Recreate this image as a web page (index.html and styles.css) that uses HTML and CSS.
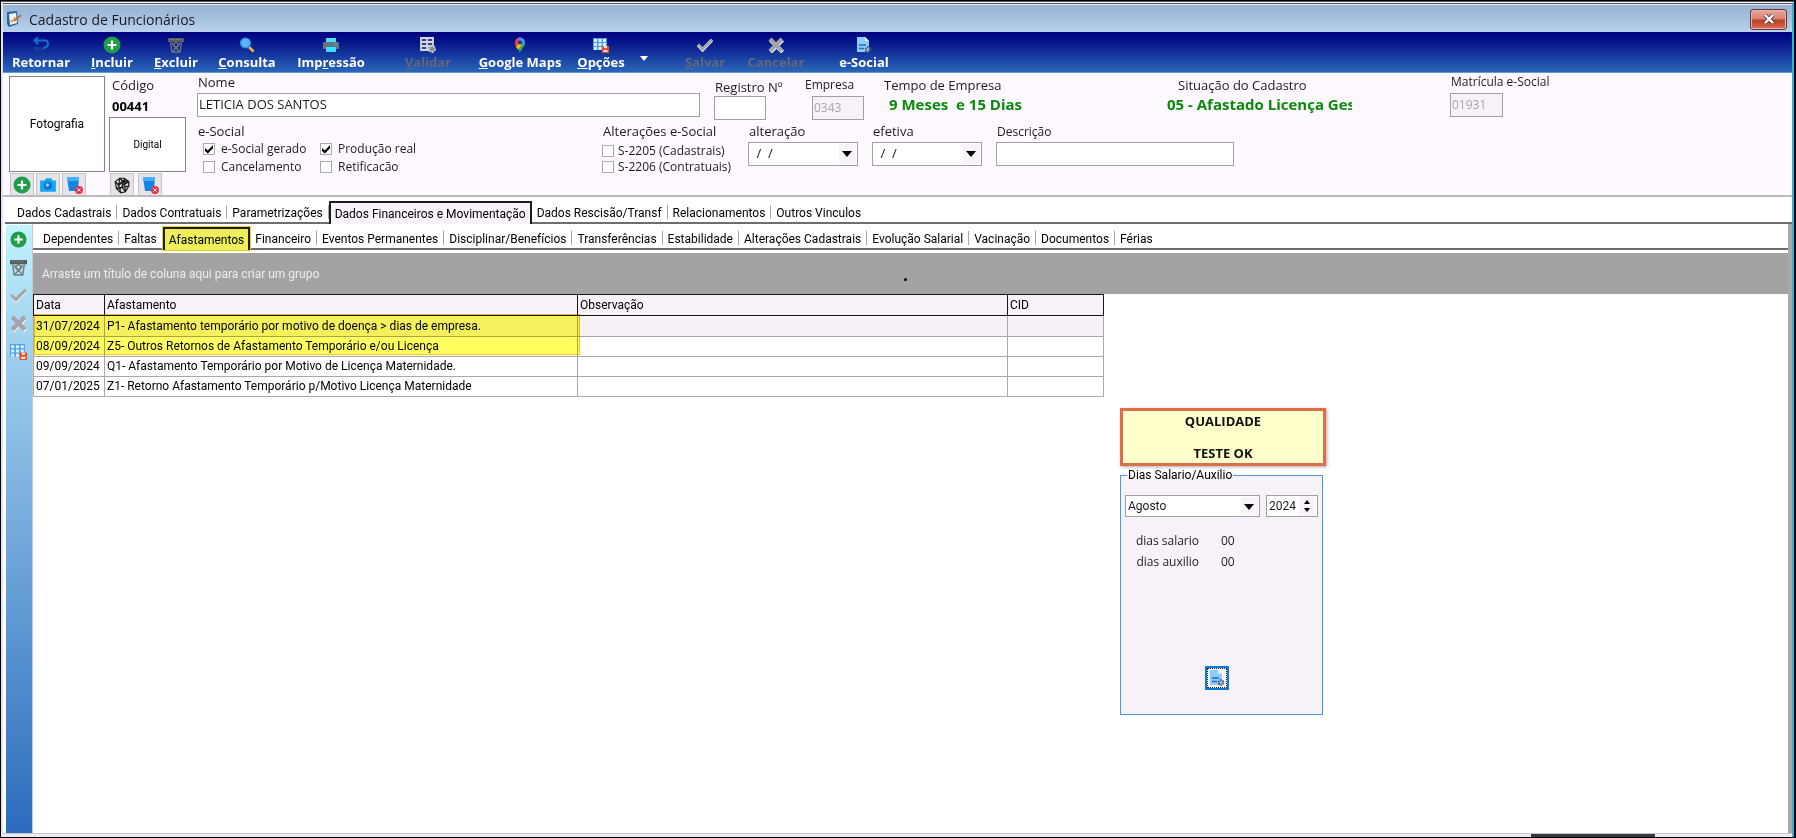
FILE: index.html
```
<!DOCTYPE html>
<html lang="pt-BR">
<head>
  <meta charset="UTF-8">
  <meta name="viewport" content="width=device-width, initial-scale=1.0">
  <title>Cadastro de Funcionários</title>
  <link rel="stylesheet" href="styles.css">
</head>
<body>
  <svg class="defs" aria-hidden="true">
    <symbol id="i-mais" viewBox="0 0 18 18">
      <circle cx="9" cy="9" r="8.500" fill="#1f9d49"/>
      <path d="M9 4.500v9M4.500 9h9" stroke="#fff" stroke-width="2.200"/>
    </symbol>
    <symbol id="i-voltar" viewBox="0 0 16 16">
      <path d="M5 0L1.500 3.500 5 7M2 3.500h10a3 3 0 0 1 3 3q0 4-5 4.500" fill="none" stroke="#1670c8" stroke-width="2"/>
      <path d="M2 10v4M4.500 10v4M7 10v4M9.500 11v3" stroke="#1457ae"/>
    </symbol>
    <symbol id="i-lixo" viewBox="0 0 16 16">
      <path d="M0 1h16v4H0z" fill="#555b60"/>
      <path d="M2 2.500h12" stroke="#8b9094" stroke-dasharray="1 1"/>
      <path d="M2.500 5l1.500 10h8l1.500-10M4 6l7 8M12 6l-7 8M8 5l3 3-3 3-3-3z" fill="none" stroke="#70777b" stroke-width="1.300"/>
    </symbol>
    <symbol id="i-lupa" viewBox="0 0 16 16">
      <path d="M10 10l4.500 4.500" stroke="#f2bd43" stroke-width="2.500"/>
      <circle cx="6.500" cy="6" r="5" fill="#59b5fb" stroke="#2d86dc" stroke-width="1.200"/>
    </symbol>
    <symbol id="i-impressora" viewBox="0 0 16 16">
      <path d="M3 1h10v4H3z" fill="#4fdff5"/>
      <path d="M1 5h14q1 0 1 1v6H0V6q0-1 1-1z" fill="#66747e"/>
      <path d="M3 10h10v5H3z" fill="#3ddcf6"/>
      <path d="M12 7h2" stroke="#3ddcf6"/>
    </symbol>
    <symbol id="i-validar" viewBox="0 0 16 16">
      <path d="M1 1h12v12H1zM1 5h12M1 9h12M7 1v12" fill="#33418f" stroke="#d8d8de" stroke-width="1.800"/>
      <circle cx="12" cy="12" r="3" fill="#8c8c94" stroke="#c8c8ce" stroke-width="2" stroke-dasharray="2 1"/>
    </symbol>
    <symbol id="i-mapa" viewBox="0 0 16 16">
      <path d="M8 16C7 12 3 10 3 5.500L8 6l5 0c0 4-4 6-5 10z" fill="#34a853"/>
      <path d="M3 5.500C3 3 4.500 1.500 6 1l3 4-4.500 5.500C3.500 9 3 7.500 3 5.500z" fill="#ea4335"/>
      <path d="M8 5l-4 5 2 2.500 6-7z" fill="#fbbc04"/>
      <path d="M5.500 1C9-.500 13 1.500 13 5.500L10 9 7 4z" fill="#4a90f0"/>
      <circle cx="8" cy="5.500" r="2" fill="#123b8c"/>
    </symbol>
    <symbol id="i-grade" viewBox="0 0 16 16">
      <path d="M0 1h14v12H0z" fill="#4b9fe0"/>
      <path d="M1 2h3v3H1zM5.500 2h3v3h-3zM10 2h3v3h-3zM1 6h3v3H1zM5.500 6h3v3h-3zM10 6h3v3h-3zM1 10h3v3H1zM5.500 10h3v3h-3z" fill="#d9f1ff"/>
      <path d="M9 9h7v7H9z" fill="#f04d23"/>
      <path d="M11 9h3v2h-3zM10.500 13h4v2h-4z" fill="#ffe5db"/>
    </symbol>
    <symbol id="i-check" viewBox="0 0 16 16">
      <path d="M1 8l4.500 5L15 3" fill="none" stroke="#fff" stroke-width="3"/>
      <path d="M1 7.500L5.500 12 15 2.500" fill="none" stroke="#a6a6ac" stroke-width="3"/>
    </symbol>
    <symbol id="i-x" viewBox="0 0 16 16">
      <path d="M2.500 3l12 12M14.500 3l-12 12" stroke="#fff" stroke-width="4"/>
      <path d="M2 2l12 12M14 2L2 14" stroke="#a3a3a9" stroke-width="4"/>
    </symbol>
    <symbol id="i-doc" viewBox="0 0 16 16">
      <path d="M1 0h8l4 4v11H1z" fill="#8fcbfb"/>
      <path d="M9 0l4 4H9z" fill="#dcefff"/>
      <path d="M3 8h7M3 11.500h5" stroke="#1c6fd0" stroke-width="1.500"/>
      <circle cx="12" cy="12.500" r="2.300" fill="none" stroke="#4d5f70" stroke-width="2.200" stroke-dasharray="1.500 .7"/>
    </symbol>
    <symbol id="i-camera" viewBox="0 0 16 16">
      <path d="M1 4h4l1-2h5l1 2h3v10H1z" fill="#18a4f4"/>
      <circle cx="8" cy="8.500" r="3.500" fill="#0870c5"/>
      <circle cx="7.500" cy="8" r="1.500" fill="#8ed5fb"/>
    </symbol>
    <symbol id="i-apagar" viewBox="0 0 18 18">
      <path d="M2 1h12l-1 14H4z" fill="#1286e2"/>
      <path d="M2 1h12v4H2z" fill="#42b1fa"/>
      <circle cx="14" cy="14" r="4" fill="#ed334c"/>
      <path d="M12.500 12.500l3 3M15.500 12.500l-3 3" stroke="#fff"/>
    </symbol>
    <symbol id="i-digital" viewBox="0 0 16 16">
      <g fill="none" stroke="#181818" stroke-width="1.100">
        <path d="M2 5l4-3 4 0 4 3 0 4-3 5-4 1-4-4z"/>
        <path d="M2 5l3 3 1-6M5 8l4-4 5 1M5 8l2 7M9 4l-1 6 6-1M8 10l3 4M3 11l5-1M6 2l5 5M11 7l3-2M10 2l1 12M4 9l4-3M12 4l-6 8"/>
      </g>
    </symbol>
    <symbol id="i-app" viewBox="0 0 18 18">
      <path d="M2 2l10-1 1 13-9 3-2-3z" fill="#2464a8"/>
      <path d="M4 4l7-1 1 10-7 2z" fill="#f3f8fe"/>
      <path d="M5 10l2 2 3-5" fill="none" stroke="#e4a93a" stroke-width="1.500"/>
      <path d="M9 11l7-6" stroke="#b96c3c" stroke-width="2"/>
    </symbol>
  </svg>

  <div class="janela">
    <header class="titulo">
      <svg class="icone-app"><use href="#i-app"/></svg>
      <h1>Cadastro de Funcionários</h1>
      <button class="fechar" aria-label="Fechar">
        <svg viewBox="0 0 12 10"><path d="M2 1l8 8M10 1L2 9" stroke="#55454b" stroke-width="4"/><path d="M2 1l8 8M10 1L2 9" stroke="#fff" stroke-width="2.400"/></svg>
      </button>
    </header>

    <nav class="barra">
      <div class="grupo">
        <button class="w-76"><svg><use href="#i-voltar"/></svg>Retornar</button>
        <button class="w-66"><svg class="maior"><use href="#i-mais"/></svg><span><u>I</u>ncluir</span></button>
        <button class="w-62"><svg><use href="#i-lixo"/></svg><span><u>E</u>xcluir</span></button>
        <button class="w-80"><svg><use href="#i-lupa"/></svg><span><u>C</u>onsulta</span></button>
        <button class="w-88"><svg><use href="#i-impressora"/></svg><span>Imp<u>r</u>essão</span></button>
      </div>
      <div class="grupo">
        <button class="w-88" disabled><svg><use href="#i-validar"/></svg><span><u>V</u>alidar</span></button>
        <button class="w-96"><svg><use href="#i-mapa"/></svg><span><u>G</u>oogle Maps</span></button>
        <button class="w-66"><svg><use href="#i-grade"/></svg><span><u>O</u>pções</span></button>
        <button class="mais-opcoes" aria-label="Mais opções"></button>
      </div>
      <div class="grupo">
        <button class="w-62" disabled><svg><use href="#i-check"/></svg><span><u>S</u>alvar</span></button>
        <button class="w-80" disabled><svg><use href="#i-x"/></svg>Cancelar</button>
        <button class="w-96"><svg><use href="#i-doc"/></svg>e-Social</button>
      </div>
    </nav>

    <section class="cabecalho">
      <div class="foto">
        <div class="quadro quadro-foto">Fotografia</div>
        <div class="mini">
          <button aria-label="Adicionar foto"><svg><use href="#i-mais"/></svg></button>
          <button aria-label="Câmera"><svg><use href="#i-camera"/></svg></button>
          <button aria-label="Apagar foto"><svg><use href="#i-apagar"/></svg></button>
        </div>
      </div>
      <div class="codigo">
        <span class="rotulo">Código</span>
        <strong>00441</strong>
        <div class="quadro quadro-digital">Digital</div>
        <div class="mini">
          <button aria-label="Ler digital"><svg><use href="#i-digital"/></svg></button>
          <button aria-label="Apagar digital"><svg><use href="#i-apagar"/></svg></button>
        </div>
      </div>

      <div class="dados">
        <div class="linha">
          <div class="campo nome">
            <label for="nome">Nome</label>
            <input type="text" id="nome" value="LETICIA DOS SANTOS">
          </div>
          <div class="campo registro">
            <label for="registro">Registro Nº</label>
            <input type="text" id="registro">
          </div>
          <div class="campo empresa">
            <label for="empresa">Empresa</label>
            <input type="text" id="empresa" value="0343" disabled>
          </div>
          <div class="campo tempo">
            <span class="rotulo">Tempo de Empresa</span>
            <output>9 Meses&nbsp; e 15 Dias</output>
          </div>
          <div class="campo situacao">
            <span class="rotulo">Situação do Cadastro</span>
            <output>05 - Afastado Licença Ges</output>
          </div>
          <div class="campo matricula">
            <label for="matricula">Matrícula e-Social</label>
            <input type="text" id="matricula" value="01931" disabled>
          </div>
        </div>

        <div class="linha linha-2">
          <div class="campo esocial">
            <span class="rotulo">e-Social</span>
            <div class="marcas">
              <label><input type="checkbox" checked>e-Social gerado</label>
              <label><input type="checkbox" checked>Produção real</label>
              <label><input type="checkbox">Cancelamento</label>
              <label><input type="checkbox">Retificacão</label>
            </div>
          </div>
          <div class="campo alteracoes">
            <span class="rotulo">Alterações e-Social</span>
            <div class="eventos">
              <label><input type="checkbox">S-2205 (Cadastrais)</label>
              <label><input type="checkbox">S-2206 (Contratuais)</label>
            </div>
          </div>
          <div class="campo data">
            <label for="alteracao">alteração</label>
            <div class="combo"><select id="alteracao"><option>&nbsp;/&nbsp; /</option></select></div>
          </div>
          <div class="campo data">
            <label for="efetiva">efetiva</label>
            <div class="combo"><select id="efetiva"><option>&nbsp;/&nbsp; /</option></select></div>
          </div>
          <div class="campo descricao">
            <label for="descricao">Descrição</label>
            <input type="text" id="descricao">
          </div>
        </div>
      </div>
    </section>

    <nav class="abas abas-principais">
      <button>Dados Cadastrais</button>
      <button>Dados Contratuais</button>
      <button>Parametrizações</button>
      <button class="ativa">Dados Financeiros e Movimentação</button>
      <button>Dados Rescisão/Transf</button>
      <button>Relacionamentos</button>
      <button>Outros Vinculos</button>
    </nav>

    <main class="corpo">
      <aside class="lateral">
        <button aria-label="Incluir"><svg><use href="#i-mais"/></svg></button>
        <button aria-label="Excluir"><svg><use href="#i-lixo"/></svg></button>
        <button aria-label="Salvar"><svg><use href="#i-check"/></svg></button>
        <button aria-label="Cancelar"><svg><use href="#i-x"/></svg></button>
        <button aria-label="Opções"><svg><use href="#i-grade"/></svg></button>
      </aside>

      <div class="conteudo">
        <nav class="abas abas-internas">
          <button>Dependentes</button>
          <button>Faltas</button>
          <button class="ativa destaque">Afastamentos</button>
          <button>Financeiro</button>
          <button>Eventos Permanentes</button>
          <button>Disciplinar/Benefícios</button>
          <button>Transferências</button>
          <button>Estabilidade</button>
          <button>Alterações Cadastrais</button>
          <button>Evolução Salarial</button>
          <button>Vacinação</button>
          <button>Documentos</button>
          <button>Férias</button>
        </nav>

        <div class="agrupar">Arraste um título de coluna aqui para criar um grupo<i class="ponto"></i></div>

        <div class="area">
          <div class="grade">
            <table>
              <colgroup><col class="c-data"><col class="c-afast"><col class="c-obs"><col class="c-cid"></colgroup>
              <thead>
                <tr><th>Data</th><th>Afastamento</th><th>Observação</th><th>CID</th></tr>
              </thead>
              <tbody>
                <tr class="atual"><td>31/07/2024</td><td>P1- Afastamento temporário por motivo de doença &gt; dias de empresa.</td><td></td><td></td></tr>
                <tr><td>08/09/2024</td><td>Z5- Outros Retornos de Afastamento Temporário e/ou Licença</td><td></td><td></td></tr>
                <tr><td>09/09/2024</td><td>Q1- Afastamento Temporário por Motivo de Licença Maternidade.</td><td></td><td></td></tr>
                <tr><td>07/01/2025</td><td>Z1- Retorno Afastamento Temporário p/Motivo Licença Maternidade</td><td></td><td></td></tr>
              </tbody>
            </table>
            <div class="marca-texto"></div>
          </div>

          <div class="painel">
            <div class="aviso"><span>QUALIDADE</span><span>TESTE OK</span></div>
            <fieldset>
              <legend>Dias Salario/Auxilio</legend>
              <div class="periodo">
                <div class="combo mes"><select aria-label="Mês"><option>Agosto</option></select></div>
                <div class="ano"><input type="text" aria-label="Ano" value="2024"><span class="setas"></span></div>
              </div>
              <dl>
                <dt>dias salario</dt><dd>00</dd>
                <dt>dias auxilio</dt><dd>00</dd>
              </dl>
              <button class="processar" aria-label="Processar"><svg><use href="#i-doc"/></svg></button>
            </fieldset>
          </div>
        </div>
      </div>
    </main>
    <footer class="rodape"><span></span></footer>
  </div>
</body>
</html>
```
FILE: styles.css
```
* {
  box-sizing: border-box;
  margin: 0;
  padding: 0;
}

body {
  background: #000;
  min-height: 100vh;
  display: flex;
  padding: 1px 2px 1px 1px;
  font-family: "Open Sans", "Noto Sans", sans-serif;
  font-size: 13px;
  color: #1c1a20;
}

button,
input,
select {
  font: inherit;
  color: inherit;
  border: 0;
  border-radius: 0;
  background: none;
}

.defs {
  display: none;
}

.janela {
  flex: 1;
  min-width: 0;
  display: flex;
  flex-direction: column;
  background: #fdf9ff;
  border-top: 3px double #55525a;
  border-left: 2px solid #dfe6f3;
  border-right: 2px solid #27b5dc;
}

/* barra de titulo */
.titulo {
  height: 28px;
  display: flex;
  align-items: center;
  gap: 6px;
  padding: 1px 5px 0 2px;
  background: linear-gradient(#98b2d1, #a6c1df 50%, #bad2ed);
  border-top: 1px solid #e8eef6;
}

.titulo h1 {
  flex: 1;
  font-size: 14px;
  font-weight: 400;
}

.icone-app {
  width: 18px;
  height: 18px;
}

.fechar {
  width: 37px;
  height: 21px;
  border: 1px solid #6b2f3c;
  border-radius: 3px;
  background: linear-gradient(#e8a79c, #d98070 48%, #bd3a22 52%, #d56f58);
  box-shadow: inset 0 0 0 1px #eab5aa;
}

.fechar svg {
  display: block;
  width: 12px;
  height: 10px;
  margin: 0 auto;
}

/* barra de ferramentas */
.barra {
  height: 41px;
  display: flex;
  background: linear-gradient(#000080, #081a8c 30%, #2a66b8);
  border-bottom: 1px solid #5f9ad8;
}

.grupo {
  display: flex;
}

.grupo + .grupo {
  margin-left: 9px;
}

.grupo:last-child {
  margin-left: 20px;
}

.barra button {
  display: flex;
  flex-direction: column;
  align-items: center;
  justify-content: flex-end;
  font-weight: 700;
  line-height: 16px;
  padding-bottom: 2px;
  white-space: nowrap;
  color: #fff;
}

.barra button:disabled {
  color: #63667a;
}

.barra svg {
  width: 16px;
  height: 16px;
  margin-bottom: 1px;
}

.barra svg.maior {
  width: 18px;
  height: 18px;
  margin-bottom: 0;
}

.w-62 { width: 62px; }
.w-66 { width: 66px; }
.w-76 { width: 76px; }
.w-80 { width: 80px; }
.w-88 { width: 88px; }
.w-96 { width: 96px; }

.barra .mais-opcoes {
  width: 20px;
  padding-bottom: 11px;
}

.mais-opcoes::before {
  content: "";
  border: 4px solid transparent;
  border-top: 5px solid #fff;
  border-bottom: 0;
}

/* cabecalho do funcionario */
.cabecalho {
  height: 124px;
  display: flex;
  padding: 3px 6px 0;
  border-bottom: 2px solid #bdb9bf;
}

.quadro {
  display: flex;
  align-items: center;
  justify-content: center;
  border: 1px solid #858388;
  background: #fff;
  font-family: Roboto, sans-serif;
  font-size: 12px;
  color: #000;
}

.quadro-foto {
  width: 96px;
  height: 96px;
}

.quadro-digital {
  width: 77px;
  height: 55px;
  font-size: 10px;
}

.mini {
  display: flex;
  gap: 2px;
  padding: 1px 1px 0;
}

.mini button {
  width: 24px;
  height: 22px;
  border: 1px solid #c7c3c9;
  border-bottom: 0;
  background: #e7e4e9;
}

.mini svg {
  display: block;
  width: 18px;
  height: 18px;
  margin: 0 auto;
}

.codigo {
  width: 77px;
  margin: 0 11px 0 4px;
}

.codigo .rotulo,
.codigo strong {
  display: block;
  padding-left: 3px;
  line-height: 19px;
}

.codigo strong {
  color: #000;
  line-height: 22px;
}

.codigo .mini {
  gap: 4px;
}

.dados {
  flex: 1;
}

.linha {
  display: flex;
  height: 47px;
}

.campo {
  display: flex;
  flex-direction: column;
}

.campo > label,
.campo > .rotulo {
  line-height: 16px;
  padding-left: 1px;
  white-space: nowrap;
}

.campo input[type="text"],
.combo {
  height: 24px;
  border: 1px solid #a19ea4;
  background: #fff;
}

.campo input[type="text"] {
  width: 100%;
  padding: 0 1px 2px;
}

.campo input:disabled {
  background: #f6f2f7;
  color: #a8a5ab;
}

.nome { width: 503px; }
.nome label,
.matricula label { margin: -2px 0 3px; }

.registro {
  width: 52px;
  margin-left: 14px;
  padding-top: 3px;
}

.registro label { margin-bottom: 1px; }

.empresa {
  width: 59px;
  margin-left: 38px;
  padding-top: 1px;
  font-size: 12px;
}

.empresa label { margin-bottom: 3px; }

.campo.empresa input {
  width: 52px;
  margin-left: 8px;
}

.tempo {
  width: 260px;
  margin-left: 20px;
  padding-top: 1px;
}

.situacao {
  width: 185px;
  margin-left: 24px;
  padding-top: 1px;
}

.situacao .rotulo { margin-left: 10px; }

.campo output {
  overflow: hidden;
  white-space: nowrap;
  font-size: 15px;
  font-weight: 700;
  line-height: 23px;
  color: #098a0b;
}

.tempo output { padding-left: 6px; }

.matricula {
  width: 53px;
  margin-left: 98px;
  font-size: 12px;
}

.linha-2 .campo > label,
.linha-2 .campo > .rotulo {
  line-height: 17px;
}

.esocial { width: 405px; }

.marcas {
  display: grid;
  grid-template-columns: 117px 120px;
  padding-left: 6px;
  font-size: 12px;
}

.marcas label,
.eventos label {
  display: flex;
  align-items: center;
  gap: 6px;
  line-height: 18px;
  white-space: nowrap;
}

.eventos {
  padding-top: 3px;
  font-size: 12px;
}

.eventos label {
  gap: 4px;
  line-height: 16px;
}

input[type="checkbox"] {
  appearance: none;
  width: 12px;
  height: 12px;
  border: 1px solid #aaa7ad;
  background: #fff;
}

input[type="checkbox"]:checked::before {
  content: "";
  display: block;
  width: 10px;
  height: 10px;
  background: #000;
  clip-path: polygon(10% 40%, 38% 65%, 90% 10%, 90% 42%, 38% 95%, 10% 70%);
}

.alteracoes { width: 146px; }

.data {
  width: 110px;
  margin-right: 14px;
}

.data label,
.descricao label {
  margin-bottom: 2px;
}

.combo {
  position: relative;
  width: 100%;
}

.combo select {
  appearance: none;
  width: 100%;
  height: 100%;
  padding: 0 20px 2px 4px;
}

.combo::before {
  content: "";
  position: absolute;
  inset: 1px 1px 1px auto;
  width: 17px;
  background: #f7f3f8;
}

.combo::after {
  content: "";
  position: absolute;
  right: 5px;
  top: 8px;
  border: 5px solid transparent;
  border-top: 6px solid #000;
  border-bottom: 0;
}

.descricao {
  width: 238px;
  font-size: 12px;
}

/* abas */
.abas {
  display: flex;
  align-items: flex-end;
  font-family: Roboto, sans-serif;
  font-size: 12px;
  background: #fff;
  border-bottom: 2px solid #6f6c72;
}

.abas button {
  position: relative;
  height: 21px;
  padding: 2px 6px 0 5px;
  white-space: nowrap;
  color: #000;
}

.abas button:not(.ativa):not(:last-child)::after {
  content: "";
  position: absolute;
  right: 0;
  top: 4px;
  height: 14px;
  border-right: 1px solid #a7a4aa;
}

.abas button.ativa {
  height: 23px;
  margin-bottom: -2px;
  padding: 0 4px;
  border: 2px solid #1d1b20;
  border-bottom: 0;
  background: #f7f3f8;
}

.abas-principais {
  height: 27px;
  margin-left: 2px;
  padding-left: 7px;
}

.abas-internas {
  height: 26px;
  padding-left: 5px;
}

.abas button.destaque {
  background: #eeee58;
  box-shadow: 0 0 0 1px #f1cf1b;
}

/* corpo */
.corpo {
  flex: 1;
  display: flex;
  background: #fff;
  padding-left: 3px;
  border-right: 4px solid #aaa7ad;
}

.lateral {
  width: 26px;
  display: flex;
  flex-direction: column;
  align-items: center;
  gap: 11px;
  padding: 6px 2px 0 0;
  margin-top: 1px;
  background: linear-gradient(#c1f4fd, #a0d0ee 20%, #2c6cbd);
}

.lateral svg {
  display: block;
  width: 17px;
  height: 17px;
}

.conteudo {
  flex: 1;
  min-width: 0;
  border-left: 1px solid #c9c6cb;
}

.agrupar {
  position: relative;
  height: 41px;
  margin: 3px 0 0;
  padding-left: 9px;
  line-height: 43px;
  font-family: Roboto, sans-serif;
  font-size: 12px;
  color: #eeecef;
  background: #a4a2a5;
}

.ponto {
  position: absolute;
  left: 871px;
  top: 25px;
  width: 3px;
  height: 3px;
  border-radius: 50%;
  background: #000;
}

.area {
  display: flex;
  align-items: flex-start;
  gap: 16px;
}

.grade {
  position: relative;
}

table {
  border-collapse: collapse;
  table-layout: fixed;
  width: 1070px;
  font-family: Roboto, sans-serif;
  font-size: 12px;
  color: #000;
}

.c-data { width: 71px; }
.c-afast { width: 473px; }
.c-obs { width: 430px; }
.c-cid { width: 96px; }

th,
td {
  height: 20px;
  padding: 0 2px;
  border: 1px solid #aaa7ad;
  text-align: left;
  font-weight: 400;
  line-height: 19px;
  white-space: nowrap;
}

th,
.atual td {
  height: 21px;
}

th {
  border: 1px solid #18161b;
  background: #f7f3f8;
}

.atual td {
  background: #f5f1f6;
}

.marca-texto {
  position: absolute;
  left: 1px;
  top: 20px;
  width: 546px;
  height: 41px;
  background: #ffff60;
  border: 1px solid #f5c90c;
  mix-blend-mode: multiply;
}

/* painel da direita */
.painel {
  width: 206px;
  padding-top: 114px;
}

.aviso {
  height: 58px;
  display: flex;
  flex-direction: column;
  align-items: center;
  justify-content: space-between;
  border: 3px solid #e16c49;
  background: #ffffcc;
  box-shadow: 1px 1px 3px #aaa;
  font-weight: 700;
  line-height: 20px;
  color: #111;
}

fieldset {
  width: 203px;
  height: 249px;
  min-width: 0;
  display: flex;
  flex-direction: column;
  border: 1px solid #4a98de;
  background: #f6f2f7;
  padding: 11px 4px 24px;
}

legend {
  margin-left: 2px;
  padding: 0 1px;
  line-height: 18px;
  font-family: Roboto, sans-serif;
  font-size: 12px;
  color: #000;
}

.periodo {
  display: flex;
  gap: 6px;
  font-family: Roboto, sans-serif;
  font-size: 12px;
}

.mes {
  width: 135px;
  height: 22px;
}

.combo.mes select { padding: 0 20px 0 2px; }

.ano {
  display: flex;
  width: 52px;
  height: 22px;
  border: 1px solid #a19ea4;
  background: #fff;
}

.ano input {
  width: 32px;
  padding-left: 2px;
}

.setas {
  display: flex;
  flex-direction: column;
  justify-content: space-around;
  padding: 2px 5px;
  background: #f7f3f8;
}

.setas::before,
.setas::after {
  content: "";
  border: 3px solid transparent;
}

.setas::before {
  border-top: 0;
  border-bottom: 4px solid #000;
}

.setas::after {
  border-bottom: 0;
  border-top: 4px solid #000;
}

dl {
  display: grid;
  grid-template-columns: 74px 40px;
  column-gap: 22px;
  padding-top: 13px;
  font-size: 12px;
  line-height: 21px;
}

dt {
  text-align: right;
}

.processar {
  width: 24px;
  height: 24px;
  margin: auto 0 0 80px;
  border: 2px solid #0a7ad8;
  outline: 1px dotted #222;
  outline-offset: -3px;
}

.processar svg {
  display: block;
  width: 16px;
  height: 16px;
  margin: 0 auto;
}

.rodape {
  height: 4px;
  display: flex;
  background: #eceaf0;
  border-top: 1px solid #c5c7d2;
}

.rodape span {
  width: 124px;
  margin-left: auto;
  margin-right: 137px;
  background: #343a3e;
}
```
